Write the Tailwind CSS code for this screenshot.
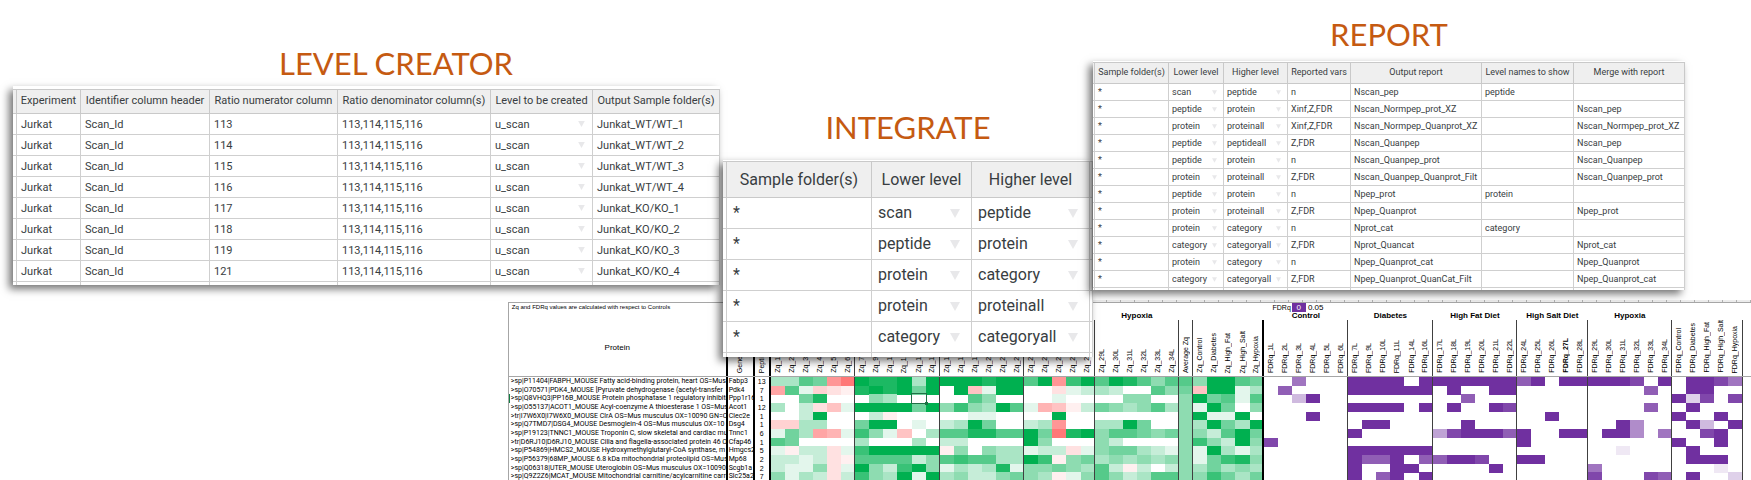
<!DOCTYPE html>
<html lang="en">
<head>
<meta charset="utf-8">
<title>Level creator, integrate, report</title>
<script src="https://cdn.jsdelivr.net/npm/@tailwindcss/browser@4"></script>
</head>
<body class="bg-white">
<main class="grid overflow-hidden font-['Roboto',sans-serif] text-[#383d41]">

  <!-- Result sheet, behind the panels -->
  <section aria-label="Results" class="col-start-1 row-start-1 ml-[29%] pt-[300px] font-['Liberation_Sans',sans-serif] text-[7px] text-black">
    <div class="h-[2px] ml-[47%] bg-[repeating-linear-gradient(90deg,#b0b0b0_0px,#b0b0b0_1px,#ececec_1px,#ececec_14px)]"></div>
    <table class="block border-l border-t border-[#a6a6a6]">
      <thead id="sheet-head" class="block border-b border-[#a6a6a6]"></thead>
      <tbody id="sheet-body" class="grid grid-rows-12 h-[104px]"></tbody>
    </table>
  </section>

  <div class="col-start-1 row-start-1 z-10 grid grid-cols-[707fr_370fr_592fr_69fr] items-start pl-[13px]">
    <section class="pt-[43px] mr-[-3px]">
      <h2 class="pl-14 mb-[3px] text-center font-['Lato',sans-serif] text-[31px] leading-[40px] text-[#c55a11]">LEVEL CREATOR</h2>
      <div class="mr-[3px] bg-white pt-[3px] shadow-[-4px_4px_8px_rgba(0,0,0,0.55)]">
        <table id="creator" class="w-full table-fixed border-separate border-spacing-0 text-[11px]"></table>
      </div>
    </section>
    <section class="pt-[107px] ml-[3px] mr-[-3px]">
      <h2 class="mb-[13px] text-center font-['Lato',sans-serif] text-[31px] leading-[40px] text-[#c55a11]">INTEGRATE</h2>
      <div class="bg-white pt-px shadow-[-4px_4px_8px_rgba(0,0,0,0.55)]">
        <table id="integrate" class="w-full table-fixed border-separate border-spacing-0 text-[16px]"></table>
      </div>
    </section>
    <section class="pt-[14px] ml-[3px] mr-[-3px]">
      <h2 class="mb-[7px] text-center font-['Lato',sans-serif] text-[31px] leading-[40px] text-[#c55a11]">REPORT</h2>
      <div class="bg-white pt-px shadow-[-4px_4px_8px_rgba(0,0,0,0.55)]">
        <table id="report" class="w-full table-fixed border-separate border-spacing-0 text-[9px]"></table>
      </div>
    </section>
  </div>
</main>

<script>
/* ---- Panels ---- */
const picker = (value, label, arrow) =>
  `<div class="flex items-center"><select aria-label="${label}" class="min-w-0 flex-1 appearance-none bg-transparent p-0"><option>${value}</option></select>` +
  `<svg aria-hidden="true" viewBox="0 0 10 9" class="pointer-events-none shrink-0 ${arrow}"><path d="M0 0H10L5 9Z" fill="#e8e8ea"/></svg></div>`;

function panel(id, o) {
  const cols = o.cols.map(c => `<col class="${c}">`).join('');
  const head = o.heads.map(h => `<th scope="col" class="border-r border-b border-t border-[#c9c9c9] bg-[#efefef] p-0 font-normal whitespace-nowrap ${o.headH}">${h}</th>`).join('');
  const rows = o.rows.map(r => '<tr><td class="border-r border-b border-[#cfcfcf] p-0"></td>' + r.map((v, i) =>
    `<td class="border-r border-b border-[#cfcfcf] py-0 pr-0 leading-none whitespace-nowrap ${o.cell}">${o.pick.includes(i) ? picker(v, o.heads[i + 1], o.arrow) : v}</td>`).join('') + '</tr>').join('');
  const tail = '<tr aria-hidden="true">' + o.heads.map(() => `<td class="border-r border-[#cfcfcf] p-0 ${o.tail}"></td>`).join('') + '</tr>';
  document.getElementById(id).innerHTML = `<colgroup>${cols}</colgroup><thead><tr>${head}</tr></thead><tbody>${rows}${tail}</tbody>`;
}

panel('creator', {
  cols: ['w-[4px]', 'w-[64px]', 'w-[129px]', 'w-[128px]', 'w-[153px]', 'w-[102px]', 'w-[127px]'],
  heads: ['', 'Experiment', 'Identifier column header', 'Ratio numerator column', 'Ratio denominator column(s)', 'Level to be created', 'Output Sample folder(s)'],
  headH: 'h-[25px]', cell: 'h-[21px] pl-1', arrow: 'mr-[7px] h-[6px] w-[7px]', tail: 'h-[3px]', pick: [4],
  rows: [[113, 'WT/WT_1'], [114, 'WT/WT_2'], [115, 'WT/WT_3'], [116, 'WT/WT_4'], [117, 'KO/KO_1'], [118, 'KO/KO_2'], [119, 'KO/KO_3'], [121, 'KO/KO_4']]
    .map(([n, f]) => ['Jurkat', 'Scan_Id', n, '113,114,115,116', 'u_scan', 'Junkat_' + f])
});

panel('integrate', {
  cols: ['w-[4px]', 'w-[145px]', 'w-[100px]', 'w-[118px]', 'w-[3px]'],
  heads: ['', 'Sample folder(s)', 'Lower level', 'Higher level', ''],
  headH: 'h-[37px]', cell: 'h-[31px] pl-[6px]', arrow: 'mr-[11px] h-[9px] w-[10px]', tail: 'h-[4px]', pick: [1, 2],
  rows: [['*', 'scan', 'peptide', ''], ['*', 'peptide', 'protein', ''], ['*', 'protein', 'category', ''], ['*', 'protein', 'proteinall', ''], ['*', 'category', 'categoryall', '']]
});

panel('report', {
  cols: ['w-[2px]', 'w-[74px]', 'w-[55px]', 'w-[64px]', 'w-[63px]', 'w-[131px]', 'w-[92px]', 'w-[111px]'],
  heads: ['', 'Sample folder(s)', 'Lower level', 'Higher level', 'Reported vars', 'Output report', 'Level names to show', 'Merge with report'],
  headH: 'h-[22px]', cell: 'h-[17px] pl-[3px]', arrow: 'mr-[6px] h-[5px] w-[5px]', tail: 'h-[2px]', pick: [1, 2],
  rows: [
    ['*', 'scan', 'peptide', 'n', 'Nscan_pep', 'peptide', ''],
    ['*', 'peptide', 'protein', 'Xinf,Z,FDR', 'Nscan_Normpep_prot_XZ', '', 'Nscan_pep'],
    ['*', 'protein', 'proteinall', 'Xinf,Z,FDR', 'Nscan_Normpep_Quanprot_XZ', '', 'Nscan_Normpep_prot_XZ'],
    ['*', 'peptide', 'peptideall', 'Z,FDR', 'Nscan_Quanpep', '', 'Nscan_pep'],
    ['*', 'peptide', 'protein', 'n', 'Nscan_Quanpep_prot', '', 'Nscan_Quanpep'],
    ['*', 'protein', 'proteinall', 'Z,FDR', 'Nscan_Quanpep_Quanprot_Filt', '', 'Nscan_Quanpep_prot'],
    ['*', 'peptide', 'protein', 'n', 'Npep_prot', 'protein', ''],
    ['*', 'protein', 'proteinall', 'Z,FDR', 'Npep_Quanprot', '', 'Npep_prot'],
    ['*', 'protein', 'category', 'n', 'Nprot_cat', 'category', ''],
    ['*', 'category', 'categoryall', 'Z,FDR', 'Nprot_Quancat', '', 'Nprot_cat'],
    ['*', 'protein', 'category', 'n', 'Npep_Quanprot_cat', '', 'Npep_Quanprot'],
    ['*', 'category', 'categoryall', 'Z,FDR', 'Npep_Quanprot_QuanCat_Filt', '', 'Npep_Quanprot_cat']
  ]
});

/* ---- Sheet ---- */
const track = 'grid grid-cols-[21900fr_2700fr_1600fr_repeat(69,minmax(0,1409fr))_850fr]';
const mice = [[1, 2, 3, 4, 5, 6], [7, 9, 10, 11, 14, 16], [17, 18, 19, 20, 21, 22], [24, 25, 26, 27, 28], [29, 30, 31, 32, 33, 34]];
const sums = ['Control', 'Diabetes', 'High_Fat', 'High_Salt', 'Hypoxia'];
const labels = [...mice.flat().map(n => `Zq_${n}L`), 'Average Zq', ...sums.map(s => 'Zq_' + s), ...mice.flat().map(n => `FDRq_${n}L`), ...sums.map(s => 'FDRq_' + s)];
const ends = [5, 11, 17, 22, 28, 29, 34, 40, 46, 52, 57, 63, 68];
const edge = i => ends.includes(i) ? (i === 34 ? 'border-r-2 border-black' : 'border-r border-[#404040]') : '';

const blank = (span) => `<td class="${span}"></td>`;
const group = (t, span) => `<th scope="colgroup" class="${span} text-center text-[8px] leading-[8px] font-bold whitespace-nowrap">${t}</th>`;
document.getElementById('sheet-head').innerHTML =
  `<tr class="${track} h-[9px] leading-[9px]">
     <td class="pl-[3px] whitespace-nowrap text-[6px]">Zq and FDRq values are calculated with respect to Controls</td>${blank('col-span-37')}
     <td class="col-span-2 text-right pr-px">FDRq</td><td class="bg-[#7030a0] text-center text-white text-[8px]">0</td><td class="col-span-3 pl-[2px] text-[8px]">0.05</td></tr>
   <tr class="${track} h-[8px]">${blank('col-span-3')}${group('Control', 'col-span-6')}${group('Diabetes', 'col-span-6')}${group('High Fat Diet', 'col-span-6')}${group('High Salt Diet', 'col-span-5')}${group('Hypoxia', 'col-span-6')}${blank('col-span-6')}${group('Control', 'col-span-6')}${group('Diabetes', 'col-span-6')}${group('High Fat Diet', 'col-span-6')}${group('High Salt Diet', 'col-span-5')}${group('Hypoxia', 'col-span-6')}</tr>
   <tr class="${track} h-[56px]"><th scope="col" class="flex items-center justify-center border-r-2 border-black text-[8px] font-normal">Protein</th>` +
  ['Gene', 'Peptides', ...labels].map((l, i) =>
    `<th scope="col" class="flex items-end justify-center pb-[3px] ${l === 'FDRq_27L' ? 'font-bold' : 'font-normal'} ${i < 2 ? 'border-r-2 border-black' : edge(i - 2)}"><span class="rotate-180 [writing-mode:vertical-rl] leading-[10px] whitespace-nowrap">${l}</span></th>`).join('') + '</tr>';

/* One string per row: digits are green or purple strength, letters a-i red strength, dots blank. */
const data = [
  ['>sp|P11404|FABPH_MOUSE Fatty acid-binding protein, heart OS=Mus', 'Fabp3', 13, '3365gi 988939 999899 69g79 698646 6 49965', '..6... 9999.9 999999 79.99 9998.9 .9986'],
  ['>sp|O70571|PDK4_MOUSE [Pyruvate dehydrogenase (acetyl-transfer', 'Pdk4', 7, 'f61cba 898959 .9d199 ..b12 32..64 5 d9913', '.7.... 999999 .9..99 ..... ....7. .99..'],
  ['>sp|Q8VHQ3|PP16B_MOUSE Protein phosphatase 1 regulatory inhibito', 'Ppp1r16', 1, '..58.. .43... ..64.. ..1.. ..44.. 4 95616', '..39.. ...... ..7... ..... ...... 928.8'],
  ['>sp|O55137|ACOT1_MOUSE Acyl-coenzyme A thioesterase 1 OS=Mus', 'Acot1', 12, '3.2bd1 999959 474396 1eda2 543463 4 195.4', '...... 9999.9 .9..98 ..... ....7. .9...'],
  ['>tr|I7W6X0|I7W6X0_MOUSE ClrA OS=Mus musculus OX=10090 GN=Cl', 'Clec2e', 1, '..29.. .2a... ..11.. ..9.. ...... 4 9119.', '...9.. ...... ...... ..9.. ...... 9..9.'],
  ['>sp|Q7TMD7|DSG4_MOUSE Desmoglein-4 OS=Mus musculus OX=10', 'Dsg4', 1, 'cc33.. 599.1. 2395.. 23g.. 3395.. 4 39539', '...... .99... ..9... ..... ..95.. .93.9'],
  ['>sp|P19123|TNNC1_MOUSE Troponin C, slow skeletal and cardiac mus', 'Tnnc1', 6, '153fe1 741d.3 668866 95i89 466545 4 42695', '...... 9..... 489997 9..99 .995.6 ..89.'],
  ['>tr|D6RJ10|D6RJ10_MOUSE Cilia and flagella-associated protein 46 O', 'Cfap46', 1, '65.... 3...3. 22.... 94... 42.... 4 74294', '8..... ...... ...... 9.... ...... 9..9.'],
  ['>sp|P54869|HMCS2_MOUSE Hydroxymethylglutaryl-CoA synthase, m', 'Hmgcs2', 5, '1a22b1 799999 a4.433 122b1 455321 4 19313', '...... 999999 ...... ..... ..1... .9...'],
  ['>sp|P56379|68MP_MOUSE 6.8 kDa mitochondrial proteolipid OS=Mus', 'Mp68', 2, '2212ba 666624 676633 97a45 343434 4 15784', '...... 9779.7 7998.. 99... ...... .999.'],
  ['>sp|Q06318|UTER_MOUSE Uteroglobin OS=Mus musculus OX=10090', 'Scgb1a', 2, '2114b1 942794 132381 44543 62a2.2 4 35343', '...... 9..99. ....9. ..... 6..... ...1.'],
  ['>sp|Q9Z2Z6|MCAT_MOUSE Mitochondrial carnitine/acylcarnitine carri', 'Slc25a2', 7, '4132b2 743919 342245 43a14 642366 4 47535', '...... 9.79.9 ...... ..... 8...87 .9..2']
];
const mix = (rgb, t) => `rgb(${rgb.map(c => Math.round(255 + (c - 255) * t)).join(',')})`;
const shade = (ch, rgb) => ch === '.' ? '' :
  /\d/.test(ch) ? `style="background:${mix(rgb, ch / 9)}"` : `style="background:${mix([255, 120, 120], (ch.charCodeAt(0) - 96) / 9)}"`;

document.getElementById('sheet-body').innerHTML = data.map(([name, gene, n, zq, fdr], r) => {
  const cells = [...zq.replace(/ /g, '')].map(c => shade(c, [0, 176, 80])).concat([...fdr.replace(/ /g, '')].map(c => shade(c, [112, 48, 160])));
  return `<tr class="${track} min-h-0 leading-[9px]">
    <th scope="row" class="overflow-hidden border-r-2 border-black text-left font-['Roboto',sans-serif] font-normal whitespace-nowrap ${r === 2 ? 'border-l border-l-[#107c41] pl-px' : 'pl-[2px]'}">${name.replace('>', '&gt;')}</th>
    <td class="overflow-hidden border-r-2 border-black pl-px font-['Roboto',sans-serif]">${gene}</td><td class="border-r-2 border-black text-center">${n}</td>` +
    cells.map((s, i) => r === 2 && i === 10
      ? '<td class="relative outline outline-[#1e7145]"><span class="absolute -right-[2px] -bottom-[2px] size-[3px] bg-[#1e7145]"></span></td>'
      : `<td class="${edge(i)}" ${s}></td>`).join('') + '</tr>';
}).join('');
</script>
</body>
</html>
